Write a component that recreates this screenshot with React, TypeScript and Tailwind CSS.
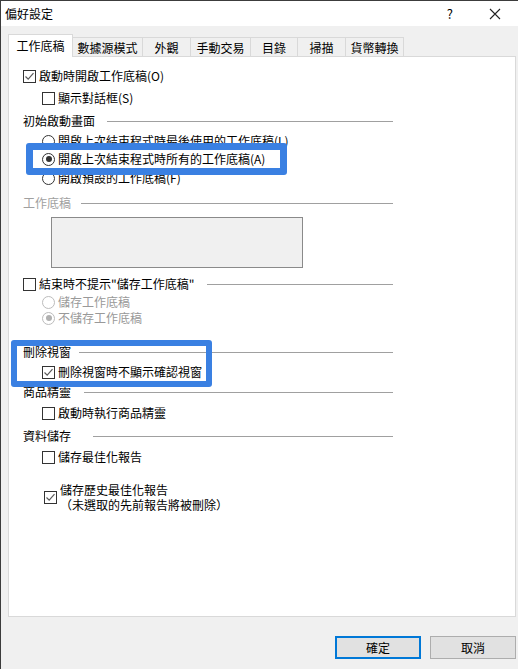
import React from "react";

const font = { fontFamily: '"Noto Sans CJK TC", "Noto Sans", sans-serif' };

function CheckBox({ checked = false }: { checked?: boolean }) {
  return (
    <div className="w-[13px] h-[13px] border border-[#333333] bg-white flex items-center justify-center shrink-0">
      {checked && (
        <svg width="11" height="11" viewBox="0 0 11 11">
          <path d="M1.5 5.5 L4.2 8.2 L9.5 2.2" fill="none" stroke="#5a5a5a" strokeWidth="1.2" />
        </svg>
      )}
    </div>
  );
}

function Radio({ checked = false, disabled = false }: { checked?: boolean; disabled?: boolean }) {
  return (
    <div
      className={
        disabled
          ? "w-[13px] h-[13px] rounded-full border border-[#bcbcbc] bg-white flex items-center justify-center shrink-0"
          : "w-[13px] h-[13px] rounded-full border border-[#333333] bg-white flex items-center justify-center shrink-0"
      }
    >
      {checked && (
        <div className={disabled ? "w-[6px] h-[6px] rounded-full bg-[#b0b0b0]" : "w-[6px] h-[6px] rounded-full bg-[#333333]"} />
      )}
    </div>
  );
}

export default function App() {
  const tabs = [
    { t: "數據源模式", w: "w-[70px]" },
    { t: "外觀", w: "w-[48px]" },
    { t: "手動交易", w: "w-[60px]" },
    { t: "目錄", w: "w-[47px]" },
    { t: "掃描", w: "w-[48px]" },
    { t: "貨幣轉換", w: "w-[58px]" },
  ];
  return (
    <div
      className="w-[518px] h-[669px] bg-[#f0f0f0] border-l border-t border-[#3c3c3c] text-[12px] text-black overflow-hidden flex flex-col"
      style={font}
    >
      {/* title bar */}
      <div className="h-[25px] bg-white flex items-center shrink-0">
        <span className="ml-[4px] leading-[16px]">偏好設定</span>
        <span className="ml-auto mr-[36px] text-[13px] leading-[16px]">?</span>
        <svg width="12" height="12" viewBox="0 0 12 12" className="mr-[17px]">
          <path d="M1 1 L11 11 M11 1 L1 11" stroke="#222" strokeWidth="1.1" />
        </svg>
      </div>

      {/* tabs */}
      <div className="flex items-end pl-[7px] mt-[8px] h-[23px] shrink-0 relative z-10">
        <div className="w-[65px] h-[23px] bg-white border-t border-l border-r border-[#d9d9d9] flex items-center justify-center leading-[16px] pb-[1px]">
          工作底稿
        </div>
        {tabs.map((tb) => (
          <div
            key={tb.t}
            className={`${tb.w} h-[20px] border-t border-r border-[#d9d9d9] flex items-center justify-center leading-[16px]`}
          >
            {tb.t}
          </div>
        ))}
      </div>

      {/* panel */}
      <div className="relative ml-[7px] -mt-px w-[508px] h-[561px] bg-white border border-[#d9d9d9] shrink-0">
        <div className="flex flex-col pl-[14px]">
          {/* cb1 */}
          <div className="h-[16px] mt-[11px] flex items-center">
            <CheckBox checked />
            <span className="ml-[3px] leading-[16px]">啟動時開啟工作底稿(O)</span>
          </div>
          <div className="h-[16px] mt-[6px] flex items-center pl-[19px]">
            <CheckBox />
            <span className="ml-[3px] leading-[16px]">顯示對話框(S)</span>
          </div>

          {/* group 初始啟動畫面 */}
          <div className="h-[16px] mt-[7px] flex items-center w-[370px]">
            <span className="w-[84px] leading-[16px]">初始啟動畫面</span>
            <div className="flex-1 h-px bg-[#a0a0a0]" />
          </div>
          <div className="h-[16px] mt-[4px] flex items-center pl-[19px]">
            <Radio />
            <span className="ml-[3px] leading-[16px]">開啟上次結束程式時最後使用的工作底稿(L)</span>
          </div>
          <div className="h-[16px] mt-[2px] flex items-center pl-[19px]">
            <Radio checked />
            <span className="ml-[3px] leading-[16px]">開啟上次結束程式時所有的工作底稿(A)</span>
          </div>
          <div className="h-[16px] mt-[3px] flex items-center pl-[19px]">
            <Radio />
            <span className="ml-[3px] leading-[16px]">開啟預設的工作底稿(F)</span>
          </div>

          {/* group 工作底稿 (disabled) */}
          <div className="h-[16px] mt-[9px] flex items-center w-[370px]">
            <span className="w-[58px] leading-[16px] text-[#a0a0a0]">工作底稿</span>
            <div className="flex-1 h-px bg-[#a0a0a0]" />
          </div>
          <div className="mt-[6px] ml-[28px] w-[252px] h-[51px] bg-[#f0f0f0] border border-[#8a8a8a]" />

          {/* 結束時不提示 */}
          <div className="h-[16px] mt-[8px] flex items-center w-[370px]">
            <div className="w-[184px] flex items-center">
              <CheckBox />
              <span className="ml-[3px] leading-[16px]">結束時不提示"儲存工作底稿"</span>
            </div>
            <div className="flex-1 h-px bg-[#a0a0a0]" />
          </div>
          <div className="h-[16px] mt-[2px] flex items-center pl-[19px]">
            <Radio disabled />
            <span className="ml-[3px] leading-[16px] text-[#999999]">儲存工作底稿</span>
          </div>
          <div className="h-[16px] flex items-center pl-[19px]">
            <Radio disabled checked />
            <span className="ml-[3px] leading-[16px] text-[#999999]">不儲存工作底稿</span>
          </div>

          {/* 刪除視窗 */}
          <div className="h-[16px] mt-[18px] flex items-center w-[370px]">
            <span className="w-[56px] leading-[16px]">刪除視窗</span>
            <div className="flex-1 h-px bg-[#a0a0a0]" />
          </div>
          <div className="h-[16px] mt-[4px] flex items-center pl-[19px]">
            <CheckBox checked />
            <span className="ml-[3px] leading-[16px]">刪除視窗時不顯示確認視窗</span>
          </div>

          {/* 商品精靈 */}
          <div className="h-[16px] mt-[4px] flex items-center w-[370px]">
            <span className="w-[61px] leading-[16px]">商品精靈</span>
            <div className="flex-1 h-px bg-[#a0a0a0]" />
          </div>
          <div className="h-[16px] mt-[5px] flex items-center pl-[19px]">
            <CheckBox />
            <span className="ml-[3px] leading-[16px]">啟動時執行商品精靈</span>
          </div>

          {/* 資料儲存 */}
          <div className="h-[16px] mt-[7px] flex items-center w-[370px]">
            <span className="w-[70px] leading-[16px]">資料儲存</span>
            <div className="flex-1 h-px bg-[#a0a0a0]" />
          </div>
          <div className="h-[16px] mt-[5px] flex items-center pl-[19px]">
            <CheckBox />
            <span className="ml-[3px] leading-[16px]">儲存最佳化報告</span>
          </div>
          <div className="mt-[17px] flex items-center pl-[21px]">
            <CheckBox checked />
            <div className="ml-[3px] flex flex-col leading-[15px]">
              <span>儲存歷史最佳化報告</span>
              <span>（未選取的先前報告將被刪除）</span>
            </div>
          </div>
        </div>

        {/* annotation overlays */}
        <div className="absolute left-[17px] top-[86px] w-[261px] h-[32px] border-[7px] border-[#3a80e2] rounded-[3px] pointer-events-none" />
        <div className="absolute left-[2px] top-[283px] w-[201px] h-[47px] border-[6px] border-[#3a80e2] rounded-[3px] pointer-events-none" />
      </div>

      {/* buttons */}
      <div className="flex justify-end gap-[9px] pr-[2px] mt-[19px]">
        <button className="w-[86px] h-[23px] bg-[#e1e1e1] border-2 border-[#0078d7] flex items-center justify-center leading-[16px] text-[12px]">
          確定
        </button>
        <button className="w-[86px] h-[23px] bg-[#e1e1e1] border border-[#adadad] flex items-center justify-center leading-[16px] text-[12px]">
          取消
        </button>
      </div>
    </div>
  );
}
